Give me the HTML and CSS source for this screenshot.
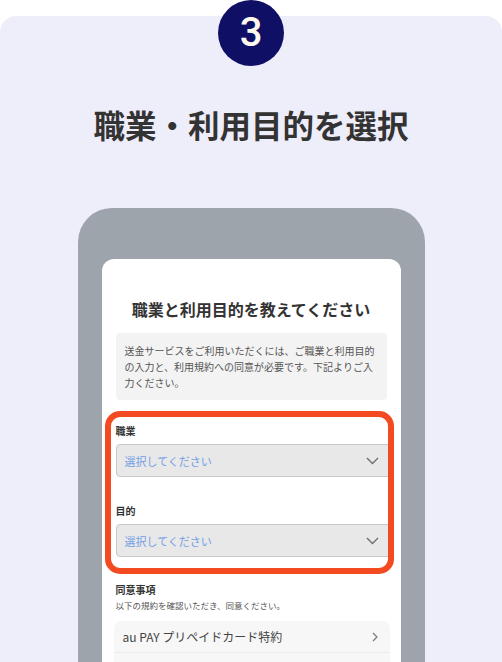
FILE: index.html
```html
<!DOCTYPE html>
<html lang="ja">

<head>
    <meta charset="UTF-8">
    <meta name="viewport" content="width=device-width, initial-scale=1.0">
    <title>職業・利用目的を選択</title>
    <link rel="stylesheet" href="styles.css">
</head>

<body>
    <main class="card">
        <div class="badge">3</div>
        <h1 class="title">職業・利用目的を選択</h1>

        <div class="phone">
            <div class="screen">
                <h2 class="screen-title">職業と利用目的を教えてください</h2>
                <p class="notice">送金サービスをご利用いただくには、ご職業と利用目的の入力と、利用規約への同意が必要です。下記よりご入力ください。</p>

                <div class="fields">
                    <label class="field-label">職業</label>
                    <div class="select">
                        <span>選択してください</span>
                        <svg width="13" height="8" viewBox="0 0 13 8"><path d="M1 1l5.5 5.5L12 1" fill="none" stroke="#6f6f6f" stroke-width="1.4"/></svg>
                    </div>
                    <label class="field-label second">目的</label>
                    <div class="select">
                        <span>選択してください</span>
                        <svg width="13" height="8" viewBox="0 0 13 8"><path d="M1 1l5.5 5.5L12 1" fill="none" stroke="#6f6f6f" stroke-width="1.4"/></svg>
                    </div>
                </div>

                <div class="agree">
                    <h3>同意事項</h3>
                    <p>以下の規約を確認いただき、同意ください。</p>
                    <ul class="terms">
                        <li>
                            <span>au PAY プリペイドカード特約</span>
                            <svg width="6" height="10" viewBox="0 0 6 10"><path d="M1 1l4 4-4 4" fill="none" stroke="#777" stroke-width="1.2"/></svg>
                        </li>
                        <li>
                            <span>アプリケーションのプライバシーポリシー</span>
                            <svg width="6" height="10" viewBox="0 0 6 10"><path d="M1 1l4 4-4 4" fill="none" stroke="#777" stroke-width="1.2"/></svg>
                        </li>
                    </ul>
                </div>
            </div>
        </div>
    </main>
</body>

</html>
```

FILE: styles.css
```css
html, body {
    margin: 0;
    height: 662px;
    overflow: hidden;
    background: #fff;
}
body {
    font-family: "Noto Sans CJK JP", "Noto Sans", sans-serif;
    color: #333;
}
.card {
    margin-top: 16px;
    height: 700px;
    background: #eeedfa;
    border-radius: 16px 16px 0 0;
    display: flex;
    flex-direction: column;
    align-items: center;
}
.badge {
    margin-top: -16px;
    width: 66px;
    height: 66px;
    border-radius: 50%;
    background: #0f0f66;
    color: #fff8ec;
    font-family: Roboto, "Liberation Sans", sans-serif;
    font-weight: 500;
    font-size: 40px;
    line-height: 66px;
    text-align: center;
}
.title {
    margin: 38px 0 0;
    font-size: 31.5px;
    line-height: 40px;
    font-weight: 700;
    color: #333;
}
.phone {
    margin-top: 64px;
    width: 347px;
    height: 480px;
    box-sizing: border-box;
    padding: 51px 24px 0;
    background: #9ea4ab;
    border-radius: 34px 34px 0 0;
}
.screen {
    background: #fff;
    border-radius: 12px 12px 0 0;
    height: 100%;
    padding: 0 14px;
}
.screen-title {
    margin: 0;
    padding-top: 38px;
    font-size: 16px;
    line-height: 24px;
    font-weight: 700;
    text-align: center;
    color: #333;
}
.notice {
    margin: 12px 0 0;
    padding: 10px 6px 9px 9px;
    background: #f3f3f3;
    border-radius: 4px;
    font-size: 10px;
    line-height: 16px;
    color: #555;
}
.fields {
    position: relative;
    margin-top: 11px;
    padding: 13px 0 17px;
}
.fields::after {
    content: "";
    position: absolute;
    top: 0;
    bottom: 0;
    left: -11px;
    right: -7px;
    border: 6px solid #f34a21;
    border-radius: 15px;
}
.field-label {
    display: block;
    font-size: 10px;
    line-height: 14px;
    font-weight: 700;
    color: #333;
    margin-bottom: 6px;
}
.field-label.second {
    margin-top: 27px;
}
.select {
    height: 33px;
    box-sizing: border-box;
    display: flex;
    align-items: center;
    justify-content: space-between;
    margin-right: -6px;
    padding: 0 13px 0 8px;
    background: #e8e8e8;
    border: 1px solid #c9c9c9;
    border-radius: 4px;
    font-size: 11px;
    color: #72a0e6;
}
.agree {
    margin-top: 8px;
}
.agree h3 {
    margin: 0;
    font-size: 10px;
    line-height: 15px;
    font-weight: 700;
    color: #333;
}
.agree p {
    margin: 2px 0 0;
    font-size: 8.5px;
    line-height: 12px;
    color: #555;
}
.terms {
    list-style: none;
    margin: 10px -3px 0 -2px;
    padding: 0;
    background: #f7f7f7;
    border-radius: 8px;
}
.terms li {
    height: 31px;
    display: flex;
    align-items: center;
    justify-content: space-between;
    padding: 0 12px 0 9px;
    font-size: 12px;
    color: #444;
    border-bottom: 1px solid #ececec;
}
```
